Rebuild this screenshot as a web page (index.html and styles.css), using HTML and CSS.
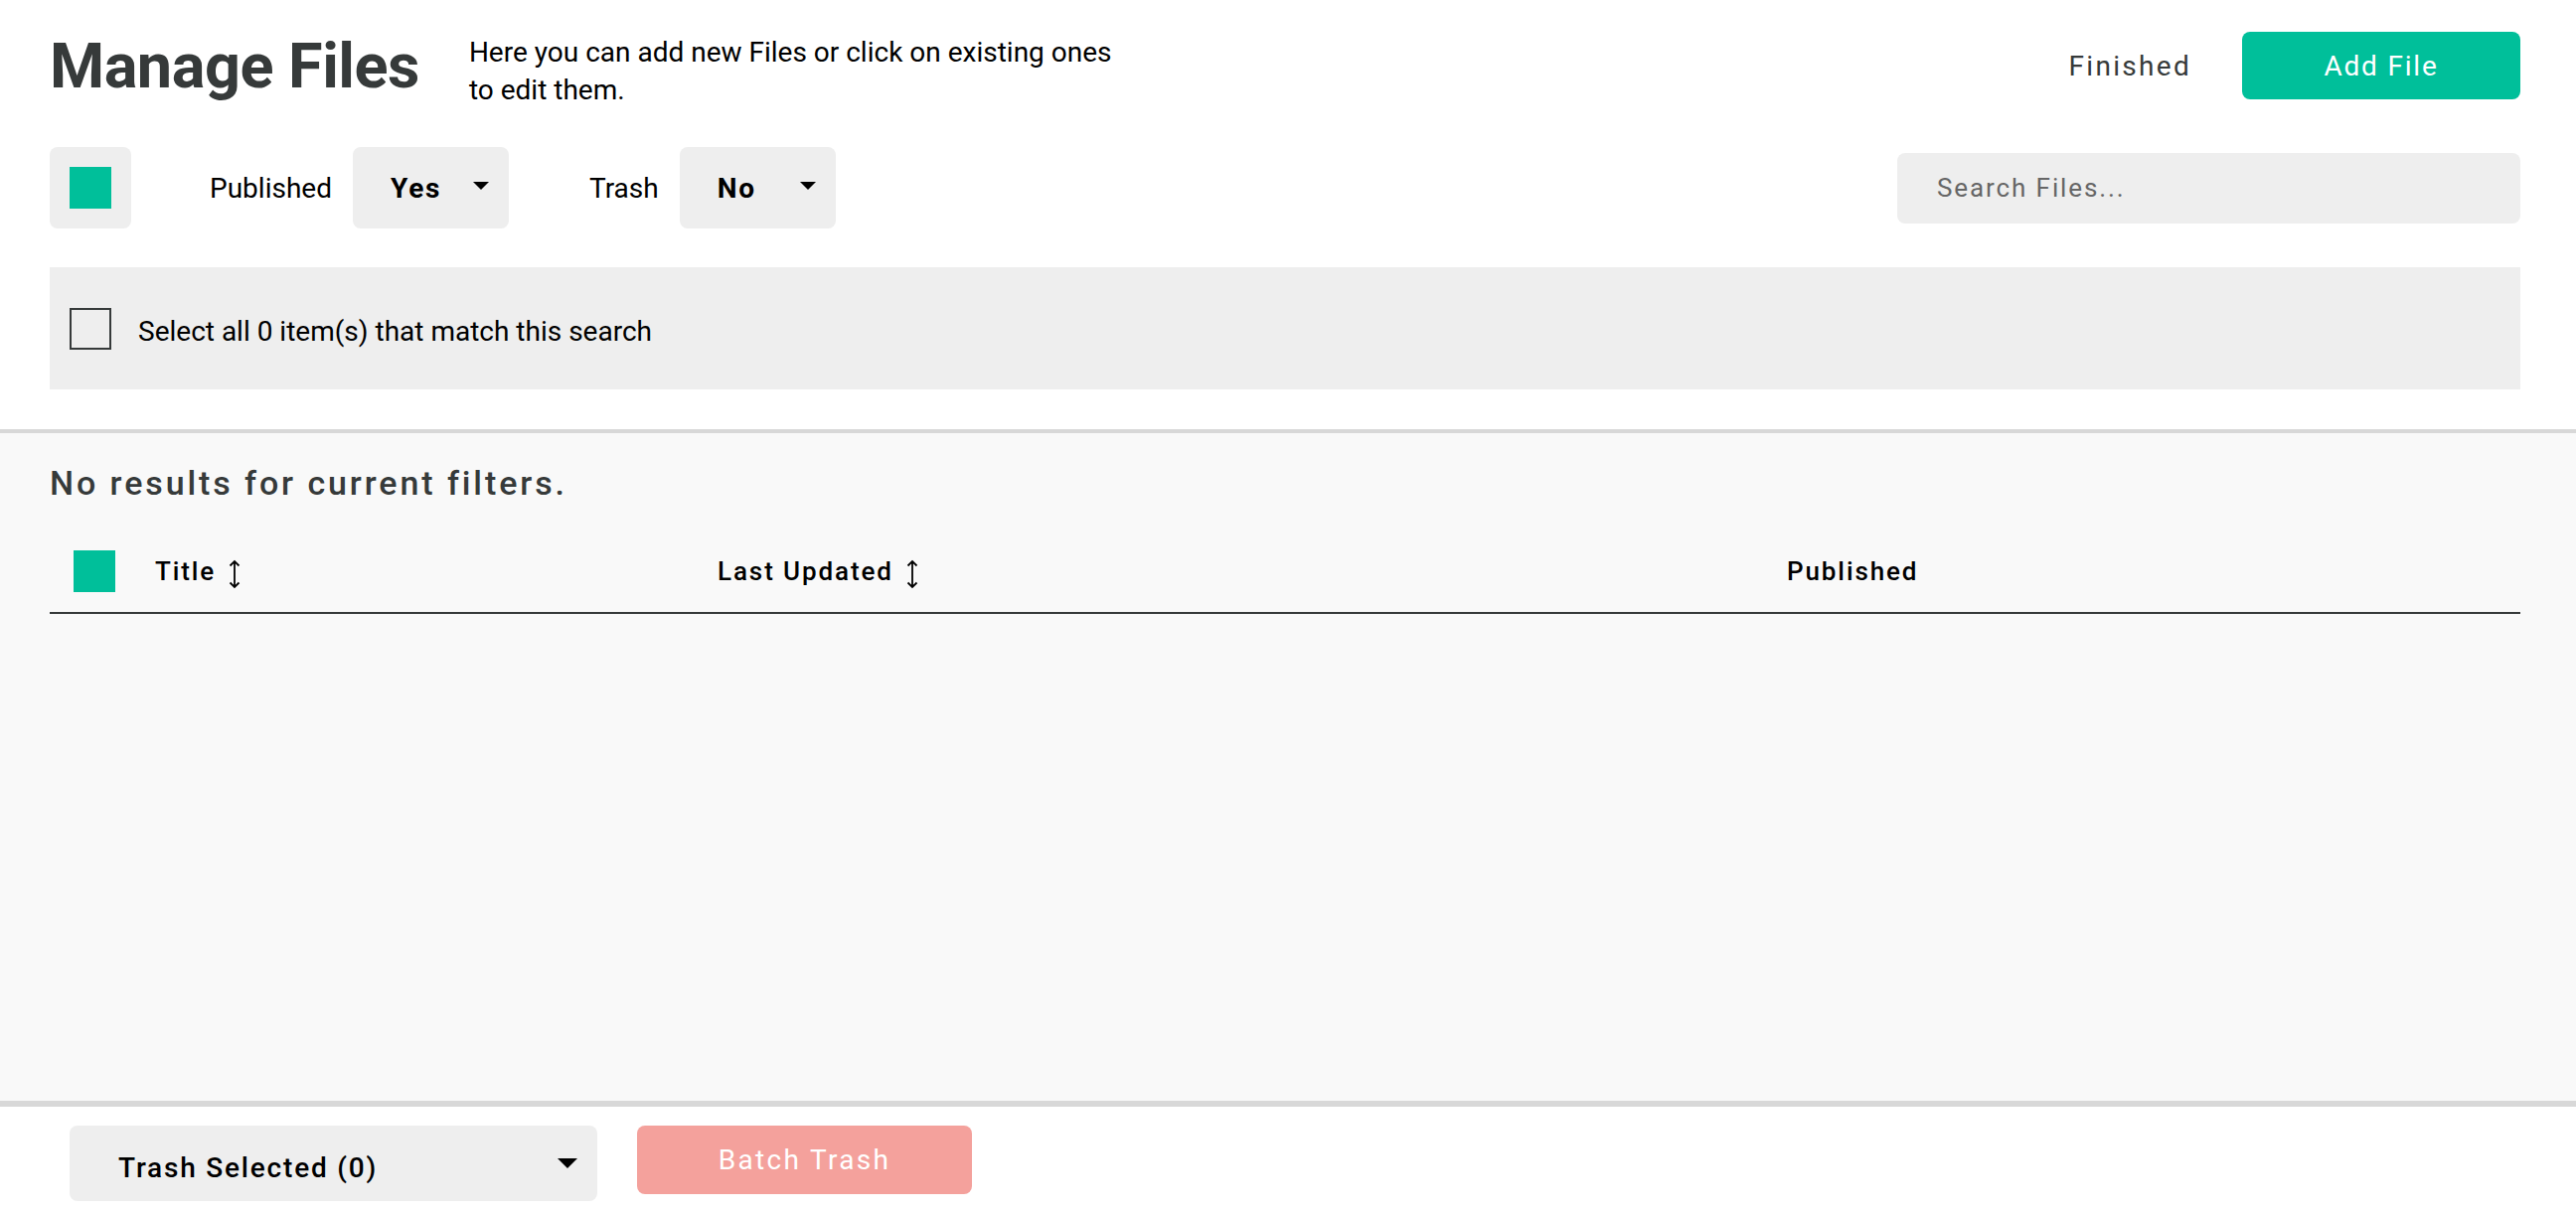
FILE: index.html
```html
<!DOCTYPE html>
<html lang="en">
<head>
<meta charset="utf-8">
<title>Manage Files</title>
<link rel="stylesheet" href="styles.css">
</head>
<body>
<div class="app">
  <section class="top">
    <header class="head">
      <div class="head-left">
        <h1 class="title">Manage Files</h1>
        <p class="desc">Here you can add new Files or click on existing ones to edit them.</p>
      </div>
      <div class="head-right">
        <span class="finished">Finished</span>
        <button class="btn-add" type="button">Add File</button>
      </div>
    </header>

    <div class="filters">
      <div class="filter-left">
        <div class="check-tile"><span class="green-box"></span></div>
        <span class="flabel flabel-first">Published</span>
        <div class="fselect"><span class="fselect-val">Yes</span><svg class="caret" width="16" height="8" viewBox="0 0 16 8"><path d="M0 0H16L8 8Z" fill="#000"/></svg></div>
        <span class="flabel">Trash</span>
        <div class="fselect"><span class="fselect-val">No</span><svg class="caret" width="16" height="8" viewBox="0 0 16 8"><path d="M0 0H16L8 8Z" fill="#000"/></svg></div>
      </div>
      <input class="search" type="text" placeholder="Search Files...">
    </div>

    <div class="select-all">
      <span class="empty-box"></span>
      <span class="select-all-text">Select all 0 item(s) that match this search</span>
    </div>
  </section>

  <main class="results">
    <h2 class="no-results">No results for current filters.</h2>
    <div class="thead">
      <div class="th th-check"><span class="green-box"></span></div>
      <div class="th">Title <svg class="sort" width="14" height="30" viewBox="0 0 14 30"><path d="M7 2V28M2.5 6.5L7 2L11.5 6.5M2.5 23.5L7 28L11.5 23.5" fill="none" stroke="#000" stroke-width="1.8"/></svg></div>
      <div class="th">Last Updated <svg class="sort" width="14" height="30" viewBox="0 0 14 30"><path d="M7 2V28M2.5 6.5L7 2L11.5 6.5M2.5 23.5L7 28L11.5 23.5" fill="none" stroke="#000" stroke-width="1.8"/></svg></div>
      <div class="th">Published</div>
    </div>
  </main>

  <footer class="foot">
    <div class="bselect"><span>Trash Selected (0)</span><svg class="caret-lg" width="20" height="10" viewBox="0 0 20 10"><path d="M0 0H20L10 10Z" fill="#000"/></svg></div>
    <button class="btn-batch" type="button">Batch Trash</button>
  </footer>
</div>
</body>
</html>
```

FILE: styles.css
```css
* { box-sizing: border-box; }

html, body {
  margin: 0;
  padding: 0;
  height: 100%;
}

body {
  font-family: Roboto, "Liberation Sans", Arial, sans-serif;
  color: #000;
  background: #fff;
}

.app {
  display: flex;
  flex-direction: column;
  height: 100vh;
}

/* ---------- top section ---------- */
.top {
  padding: 32px 56px 40px 50px;
  border-bottom: 4px solid #d8d8d8;
}

.head {
  display: flex;
  justify-content: space-between;
  align-items: center;
  height: 68px;
}

.head-left {
  display: flex;
  align-items: center;
  gap: 50px;
}

.title {
  margin: 0;
  font-size: 63px;
  font-weight: 700;
  color: #363a3a;
  line-height: 1;
  letter-spacing: -0.5px;
}

.desc {
  margin: 12px 0 0;
  font-size: 28px;
  line-height: 38px;
  max-width: 668px;
  color: #000;
}

.head-right {
  display: flex;
  align-items: center;
  gap: 51px;
}

.finished {
  font-size: 28px;
  letter-spacing: 2.3px;
  color: #363a3a;
}

.btn-add {
  width: 280px;
  height: 68px;
  border: 0;
  border-radius: 8px;
  background: #00bf9a;
  color: #fff;
  font-family: inherit;
  font-size: 28px;
  letter-spacing: 1.8px;
  padding: 0;
}

/* ---------- filters ---------- */
.filters {
  margin-top: 48px;
  height: 82px;
  display: flex;
  justify-content: space-between;
  align-items: center;
}

.filter-left {
  display: flex;
  align-items: center;
  height: 100%;
}

.check-tile {
  width: 82px;
  height: 82px;
  border-radius: 8px;
  background: #eee;
  display: flex;
  align-items: center;
  justify-content: center;
}

.green-box {
  display: block;
  width: 42px;
  height: 42px;
  background: #00bf9a;
}

.flabel {
  font-size: 28px;
  margin-left: 81px;
  margin-right: 21px;
}

.flabel-first {
  margin-left: 79px;
}

.fselect {
  width: 157px;
  height: 82px;
  border-radius: 8px;
  background: #eee;
  display: flex;
  align-items: center;
  justify-content: space-between;
  padding: 0 20px 0 38px;
}

.fselect-val {
  font-size: 28px;
  font-weight: 700;
  letter-spacing: 1.8px;
}

.caret {
  display: block;
  margin-top: -4px;
}

.search {
  width: 627px;
  height: 71px;
  border: 0;
  border-radius: 8px;
  background: #eee;
  padding: 0 20px 0 40px;
  font-family: inherit;
  font-size: 26px;
  letter-spacing: 1.9px;
  color: #333;
  outline: none;
}

.search::placeholder {
  color: #666;
  opacity: 1;
}

/* ---------- select all bar ---------- */
.select-all {
  margin-top: 39px;
  height: 123px;
  background: #eee;
  display: flex;
  align-items: center;
  padding-left: 20px;
  gap: 27px;
}

.empty-box {
  width: 42px;
  height: 42px;
  border: 2px solid #363a3a;
  background: transparent;
}

.select-all-text {
  font-size: 28px;
  padding-top: 5px;
}

/* ---------- results ---------- */
.results {
  flex: 1;
  background: #f9f9f9;
  padding: 30px 56px 0 50px;
}

.no-results {
  margin: 0;
  font-size: 34px;
  line-height: 40px;
  font-weight: 500;
  letter-spacing: 2.9px;
  color: #363a3a;
}

.thead {
  margin-top: 48px;
  display: grid;
  grid-template-columns: 106px 566px 1076px 1fr;
  align-items: center;
  padding-bottom: 20px;
  border-bottom: 2px solid #363a3a;
}

.th {
  font-size: 26px;
  font-weight: 500;
  letter-spacing: 1.9px;
  display: flex;
  align-items: center;
  gap: 12px;
}

.th-check {
  padding-left: 24px;
}

.sort {
  display: block;
  margin-top: 6px;
}

/* ---------- footer ---------- */
.foot {
  height: 114px;
  border-top: 6px solid #d8d8d8;
  background: #fff;
  display: flex;
  align-items: flex-start;
  gap: 40px;
  padding: 19px 0 0 70px;
}

.bselect {
  width: 531px;
  height: 76px;
  border-radius: 8px;
  background: #eee;
  display: flex;
  align-items: center;
  justify-content: space-between;
  padding: 8px 20px 0 49px;
  font-size: 28px;
  font-weight: 500;
  letter-spacing: 1.8px;
}

.caret-lg {
  display: block;
  margin-top: -8px;
}

.btn-batch {
  width: 337px;
  height: 69px;
  border: 0;
  border-radius: 8px;
  background: #f4a19c;
  color: #fff;
  font-family: inherit;
  font-size: 28px;
  letter-spacing: 2.3px;
  padding: 0;
}
```
